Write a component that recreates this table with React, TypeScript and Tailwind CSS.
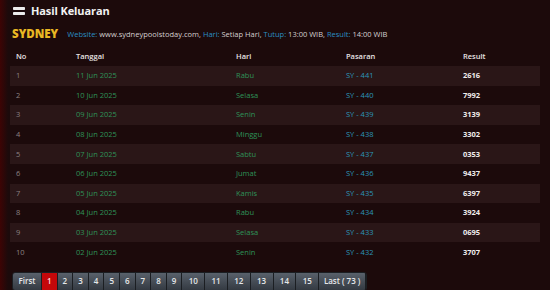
import { Fragment } from "react";

const rows = [
  { no: 1, tanggal: "11 Jun 2025", hari: "Rabu", pasaran: "SY - 441", result: "2616" },
  { no: 2, tanggal: "10 Jun 2025", hari: "Selasa", pasaran: "SY - 440", result: "7992" },
  { no: 3, tanggal: "09 Jun 2025", hari: "Senin", pasaran: "SY - 439", result: "3139" },
  { no: 4, tanggal: "08 Jun 2025", hari: "Minggu", pasaran: "SY - 438", result: "3302" },
  { no: 5, tanggal: "07 Jun 2025", hari: "Sabtu", pasaran: "SY - 437", result: "0353" },
  { no: 6, tanggal: "06 Jun 2025", hari: "Jumat", pasaran: "SY - 436", result: "9437" },
  { no: 7, tanggal: "05 Jun 2025", hari: "Kamis", pasaran: "SY - 435", result: "6397" },
  { no: 8, tanggal: "04 Jun 2025", hari: "Rabu", pasaran: "SY - 434", result: "3924" },
  { no: 9, tanggal: "03 Jun 2025", hari: "Selasa", pasaran: "SY - 433", result: "0695" },
  { no: 10, tanggal: "02 Jun 2025", hari: "Senin", pasaran: "SY - 432", result: "3707" }
];

const pages = ["1", "2", "3", "4", "5", "6", "7", "8", "9", "10", "11", "12", "13", "14", "15"];

const cols = "grid grid-cols-[66px_160px_110px_117px_1fr] items-center";

function PageButton({ label, active, width }: { label: string; active?: boolean; width: string }) {
  return (
    <span
      className={
        "flex h-[17px] items-center justify-center border-r border-[#1b1e22] text-[8px] font-semibold " +
        width +
        " " +
        (active
          ? "bg-[#c4080a] text-[#ffd9d9]"
          : "bg-gradient-to-b from-[#59616b] to-[#343a42] text-[#e6e8ea]")
      }
    >
      {label}
    </span>
  );
}

export default function App() {
  return (
    <div
      className="relative h-[290px] w-[550px] overflow-hidden bg-[#1c0a0b] text-white"
      style={{ fontFamily: '"Open Sans", "Noto Sans", sans-serif' }}
    >
      <div className="absolute inset-y-0 left-0 w-[8px] bg-gradient-to-r from-[#3d0404] to-transparent" />

      <div className="mt-[3px] flex h-[16px] items-center gap-[6px] px-[13px]">
        <svg width="12" height="10" viewBox="0 0 12 10">
          <rect x="0" y="1" width="12" height="3" rx="0.8" fill="#ececec" />
          <rect x="0" y="6" width="12" height="3" rx="0.8" fill="#ececec" />
        </svg>
        <span className="text-[11px] font-bold leading-[16px] tracking-[-0.1px] text-[#f2f2f2]">
          Hasil Keluaran
        </span>
      </div>

      <div className="mt-[6px] flex h-[18px] items-center gap-[9px] px-[12px]">
        <span className="text-[11.5px] font-extrabold leading-[18px] text-[#e9b723]">SYDNEY</span>
        <span className="pt-[1px] text-[7.5px] leading-none text-[#d4cfcf]">
          <span className="text-[#2a8fc4]">Website:</span> www.sydneypoolstoday.com,{" "}
          <span className="text-[#2a8fc4]">Hari:</span> Setiap Hari,{" "}
          <span className="text-[#2a8fc4]">Tutup:</span> 13:00 WIB,{" "}
          <span className="text-[#2a8fc4]">Result:</span> 14:00 WIB
        </span>
      </div>

      <div className="mx-[10px] mt-[4px] text-[7.5px]">
        <div className={cols + " h-[19px] font-semibold text-[#e8e4e4]"}>
          <span className="pl-[6px]">No</span>
          <span>Tanggal</span>
          <span>Hari</span>
          <span>Pasaran</span>
          <span>Result</span>
        </div>
        {rows.map((r, i) => (
          <Fragment key={r.no}>
            <div className={cols + " h-[19.6px] " + (i % 2 === 0 ? "bg-[#2a1617]" : "bg-[#1c0a0b]")}>
              <span className="pl-[6px] text-[#8d8282]">{r.no}</span>
              <span className="text-[#2e9358]">{r.tanggal}</span>
              <span className="text-[#2e9358]">{r.hari}</span>
              <span className="text-[#2b95b8]">{r.pasaran}</span>
              <span className="font-bold text-[#f0eded]">{r.result}</span>
            </div>
          </Fragment>
        ))}
      </div>

      <div className="ml-[12px] mt-[10px] flex w-fit overflow-hidden rounded-[3px] border border-[#1b1e22]">
        <PageButton label="First" width="w-[29px]" />
        {pages.map((p) => (
          <PageButton
            key={p}
            label={p}
            active={p === "1"}
            width={p.length > 1 ? "w-[22.8px]" : "w-[15.6px]"}
          />
        ))}
        <PageButton label="Last ( 73 )" width="w-[47px]" />
      </div>
    </div>
  );
}
